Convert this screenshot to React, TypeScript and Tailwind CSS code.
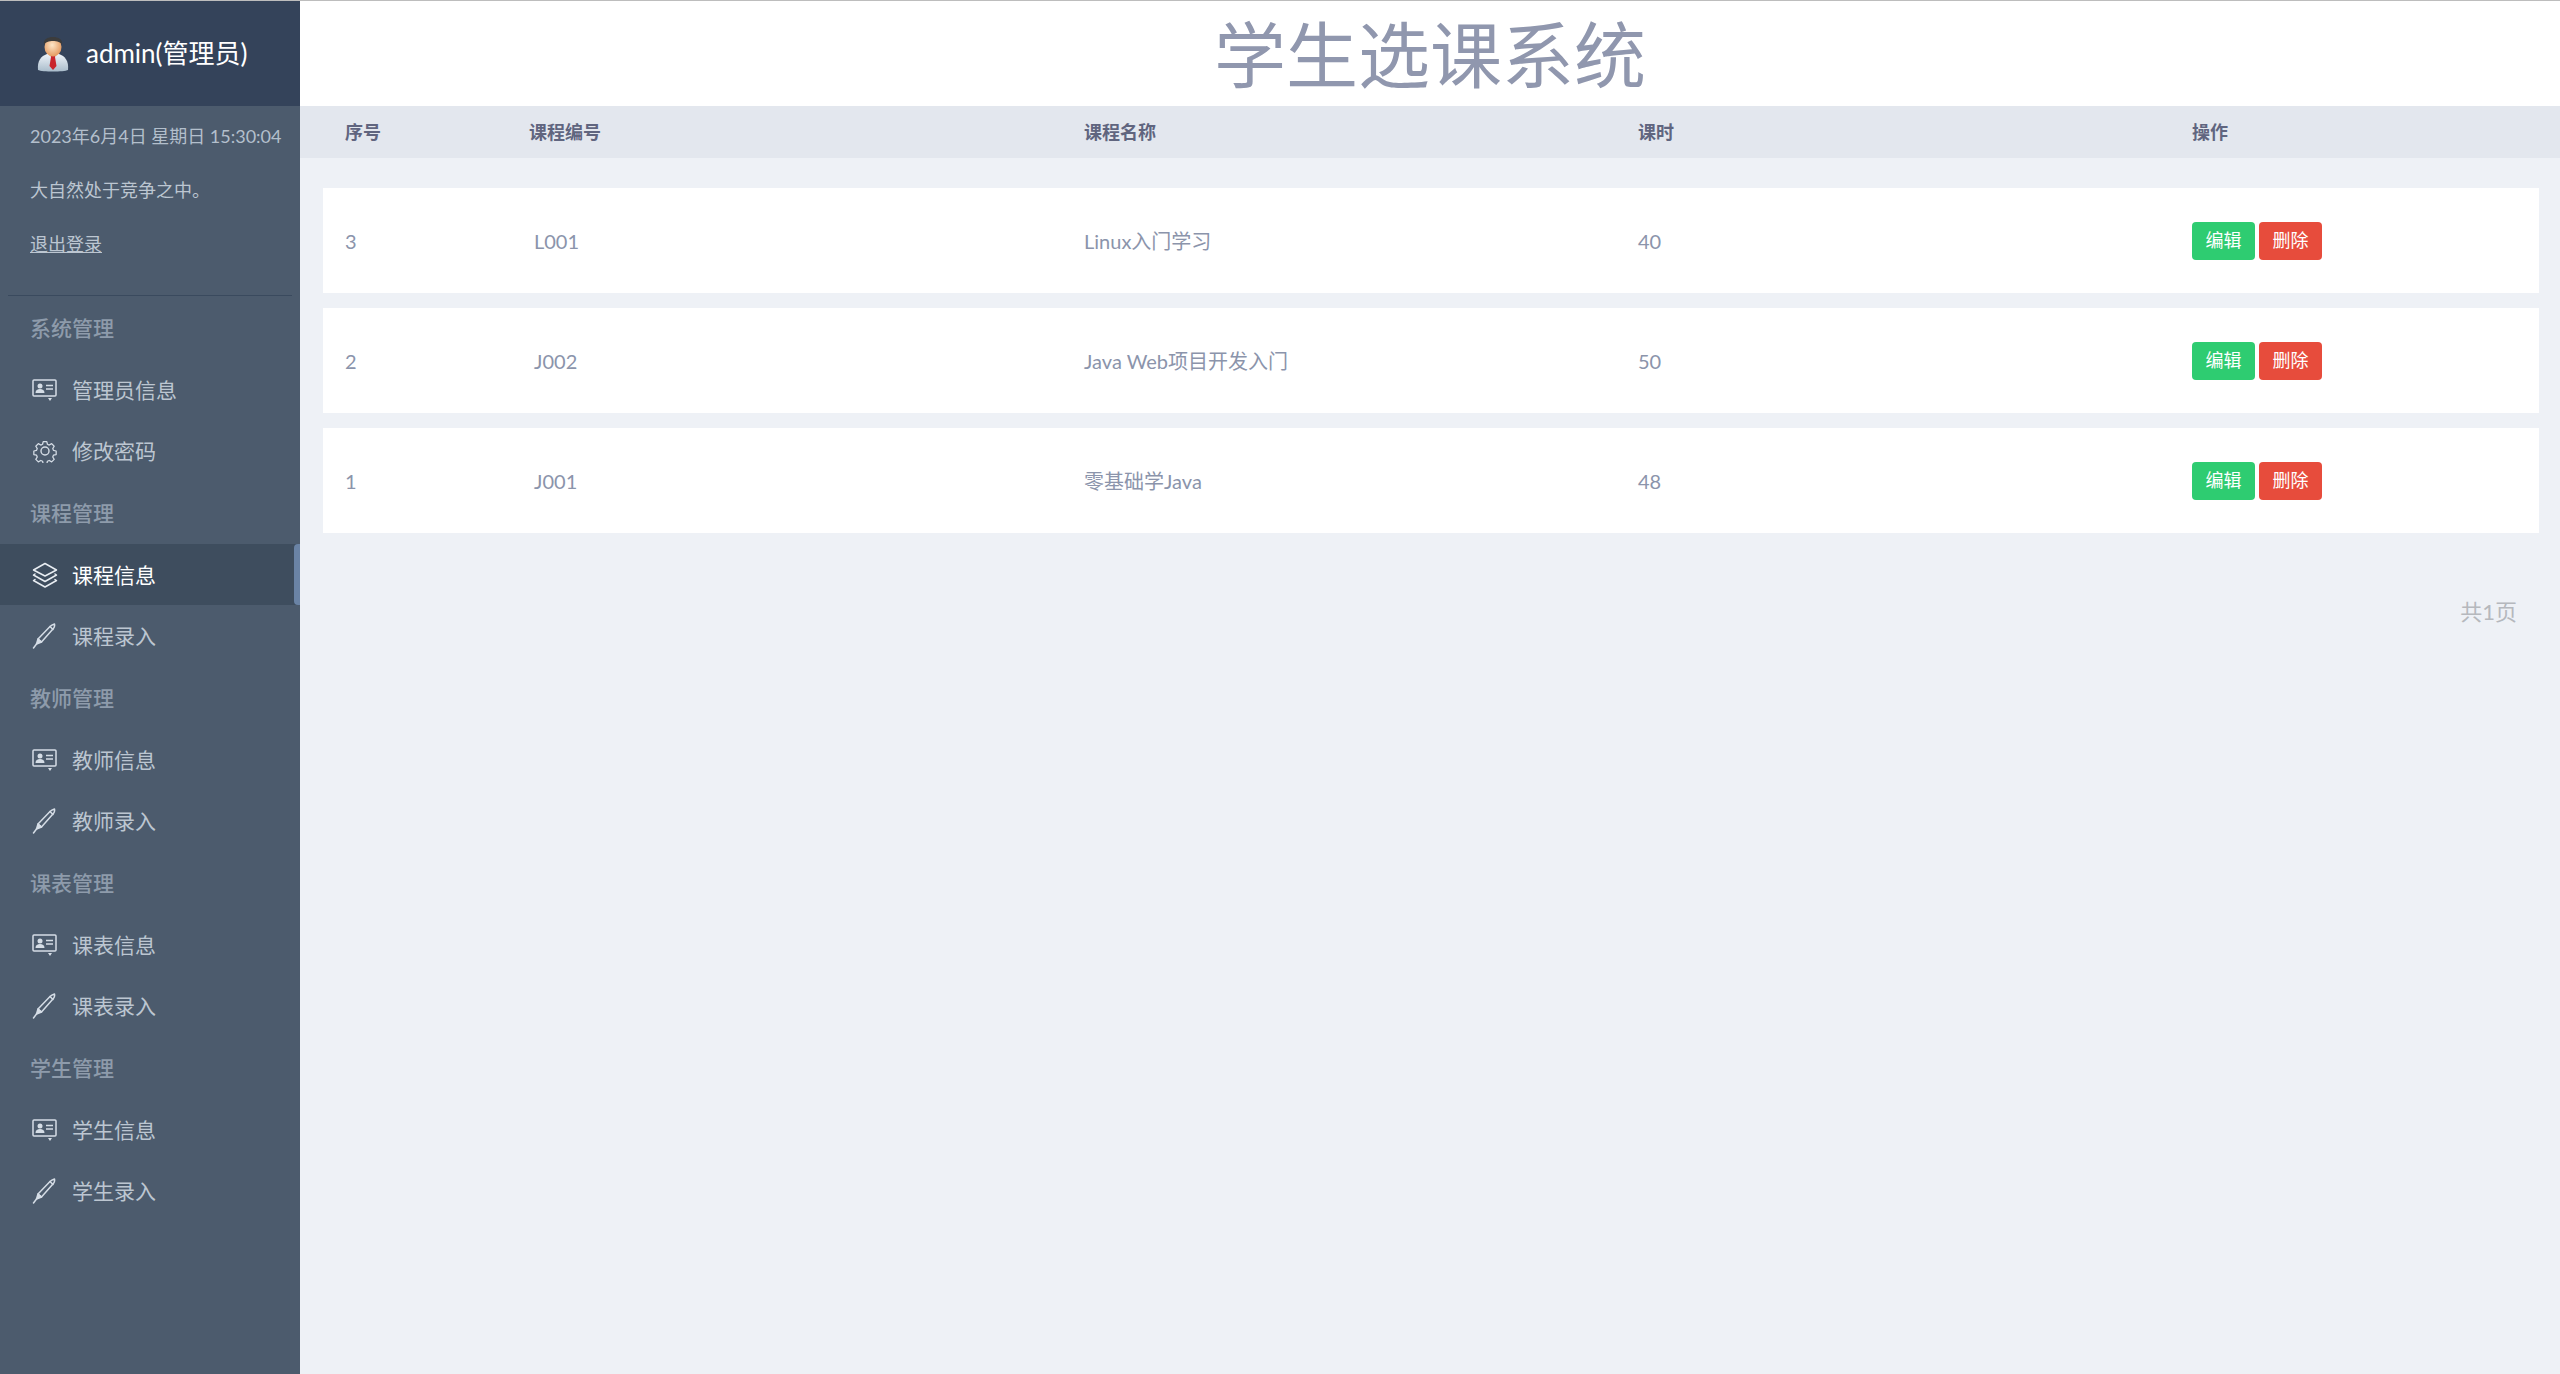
const CJK = '';
function Avatar() {
  return (
    <svg width="32" height="36" viewBox="0 0 32 36" className="shrink-0">
      <defs>
        <linearGradient id="suit" x1="0" y1="0" x2="0" y2="1"><stop offset="0" stopColor="#eef3f8" /><stop offset="1" stopColor="#a9bccb" /></linearGradient>
        <radialGradient id="face" cx="0.45" cy="0.4" r="0.6"><stop offset="0" stopColor="#fde6c8" /><stop offset="1" stopColor="#e49a60" /></radialGradient>
      </defs>
      <path d="M1 34c-1-9 3-14 9-16h12c6 2 10 7 9 16-4 2-26 2-30 0z" fill="url(#suit)" />
      <path d="M13 18h6l-1 3 1.5 9-3.500 4-3.500-4 1.500-9z" fill="#c9252c" />
      <ellipse cx="16" cy="11" rx="8.500" ry="9.500" fill="url(#face)" />
      <path d="M7 9c-1-6 4-8 9-8s10 2 9 8c-1-3-5-4-9-4s-8 1-9 4z" fill="#3c3c3c" />
    </svg>
  );
}
function CardIcon() {
  return (
    <svg width="26" height="24" viewBox="0 0 26 24" fill="none" stroke="#d5dde6" strokeWidth="1.500">
      <rect x="1" y="2" width="23" height="16" rx="1" />
      <circle cx="8" cy="8" r="2.500" fill="#d5dde6" stroke="none" />
      <path d="M3.500 15c0-3 2-4 4.500-4s4.500 1 4.500 4z" fill="#d5dde6" stroke="none" />
      <path d="M14 7.500h7M14 11h7" />
      <path d="M16 20h4l-2 3z" fill="#d5dde6" stroke="none" />
    </svg>
  );
}
function GearIcon() {
  return (
    <svg width="24" height="24" viewBox="0 0 24 24" fill="none" stroke="#d5dde6" strokeWidth="1.400" strokeLinejoin="round">
      <path d="M10 1.500h4l.7 3 2 .9 2.700-1.600 2.800 2.900-1.600 2.600.8 2 3 .7v4l-3 .7-.8 2 1.600 2.600-2.800 2.800-2.700-1.600-2 .9-.7 3h-4l-.7-3-2-.9-2.700 1.600-2.800-2.800 1.600-2.600-.8-2-3-.7v-4l3-.7.8-2L1.800 6.700l2.800-2.900 2.700 1.600 2-.9z" transform="translate(1.200 1.200) scale(.9)" />
      <circle cx="12" cy="12" r="4" />
    </svg>
  );
}
function LayersIcon() {
  return (
    <svg width="26" height="26" viewBox="0 0 26 26" fill="none" stroke="#e8edf2" strokeWidth="1.500" strokeLinejoin="round" strokeLinecap="round">
      <path d="M13 1.500 24.500 8 13 14 1.500 8z" />
      <path d="M3 12 1.500 13 13 19.500 24.500 13 23 12" />
      <path d="M3 17.500 1.500 18.500 13 25 24.500 18.500 23 17.500" />
    </svg>
  );
}
function PenIcon() {
  return (
    <svg width="26" height="26" viewBox="0 0 26 26" fill="none" stroke="#d5dde6" strokeWidth="1.500" strokeLinejoin="round" strokeLinecap="round">
      <path d="M6 16 18 3.500c1.500-1.500 3-2 4.500-2.500.5 2-.5 4-2 5.500L9.500 19z" />
      <path d="M6 16 4.500 21l5-2z" fill="#d5dde6" />
      <path d="M4.500 21 1.500 25" />
      <path d="M18 3.500 21 6.500" />
    </svg>
  );
}
function Item({ icon, label, active }: { icon: React.ReactNode; label: string; active?: boolean }) {
  return (
    <div className={`relative flex h-[61px] items-center text-[21px] ${active ? 'bg-[#3e4d5e] text-white' : 'text-[#bcc6d1]'}`}>
      <div className="flex w-[72px] justify-center pl-[18px] pr-0">{icon}</div>
      <span>{label}</span>
      {active && <div className="absolute right-0 top-0 h-full w-[6px] rounded-l-sm bg-[#6a83a5]" />}
    </div>
  );
}
function Section({ title }: { title: string }) {
  return <div className="flex h-[63px] items-center pl-[30px] text-[21px] font-medium text-[#8e9bab]">{title}</div>;
}
const groups = [
  { title: '课程管理', items: [['layers', '课程信息'], ['pen', '课程录入']] },
  { title: '教师管理', items: [['card', '教师信息'], ['pen', '教师录入']] },
  { title: '课表管理', items: [['card', '课表信息'], ['pen', '课表录入']] },
  { title: '学生管理', items: [['card', '学生信息'], ['pen', '学生录入']] },
];
const rows = [
  ['3', 'L001', 'Linux入门学习', '40'],
  ['2', 'J002', 'Java Web项目开发入门', '50'],
  ['1', 'J001', '零基础学Java', '48'],
];
export default function App() {
  return (
    <div className="flex h-[1374px] w-[2560px] overflow-hidden border-t border-[#bdbdbd] bg-[#eef1f6] font-['Lato','Noto_Sans_CJK_SC',sans-serif]">
      <aside className="flex w-[300px] shrink-0 flex-col bg-[#4c5b6d]">
        <div className="flex h-[105px] shrink-0 items-center gap-[17px] bg-[#34435a] pl-[37px] text-[26px] text-white">
          <Avatar />
          <span>admin(管理员)</span>
        </div>
        <div className="flex flex-col gap-[32px] pl-[30px] pt-[19px] text-[18px] leading-[22px] text-[#bcc6d1]">
          <div className="whitespace-nowrap text-[#b3bfcc]">2023年6月4日 星期日 15:30:04</div>
          <div>大自然处于竞争之中。</div>
          <div className="underline">退出登录</div>
        </div>
        <div className="mx-[8px] mt-[40px] border-t border-[#3a4a5e]" />
        <Section title="系统管理" />
        <Item icon={<CardIcon />} label="管理员信息" />
        <Item icon={<GearIcon />} label="修改密码" />
        {groups.map((g) => (
          <div key={g.title} className="flex flex-col">
            <Section title={g.title} />
            {g.items.map(([k, l]) => (
              <Item key={l} active={k === 'layers'} label={l} icon={k === 'layers' ? <LayersIcon /> : k === 'pen' ? <PenIcon /> : <CardIcon />} />
            ))}
          </div>
        ))}
      </aside>
      <main className="flex min-w-0 flex-1 flex-col">
        <div className="flex h-[105px] shrink-0 items-center justify-center bg-white text-[72px] text-[#9097ae]">学生选课系统</div>
        <div className="flex h-[52px] shrink-0 items-center bg-[#e3e7ee] pl-[45px] text-[18px] font-bold text-[#60657f]">
          <div className="w-[184px]">序号</div>
          <div className="w-[555px]">课程编号</div>
          <div className="w-[554px]">课程名称</div>
          <div className="w-[554px]">课时</div>
          <div>操作</div>
        </div>
        <div className="flex flex-col gap-[15px] pl-[23px] pr-[21px] pt-[30px]">
          {rows.map((r) => (
            <div key={r[0]} className="flex h-[105px] items-center bg-white pl-[22px] text-[20px] text-[#8b94ab]">
              <div className="w-[189px]">{r[0]}</div>
              <div className="w-[550px]">{r[1]}</div>
              <div className="w-[554px]">{r[2]}</div>
              <div className="w-[554px]">{r[3]}</div>
              <div className="flex gap-[4px] text-[18px] text-white">
                <button className="flex h-[38px] w-[63px] items-center justify-center rounded-[4px] bg-[#2ecc71]">编辑</button>
                <button className="flex h-[38px] w-[63px] items-center justify-center rounded-[4px] bg-[#e74c3c]">删除</button>
              </div>
            </div>
          ))}
        </div>
        <div className="pr-[43px] pt-[62px] text-right text-[22px] text-[#b5b8bd]">共1页</div>
      </main>
    </div>
  );
}
